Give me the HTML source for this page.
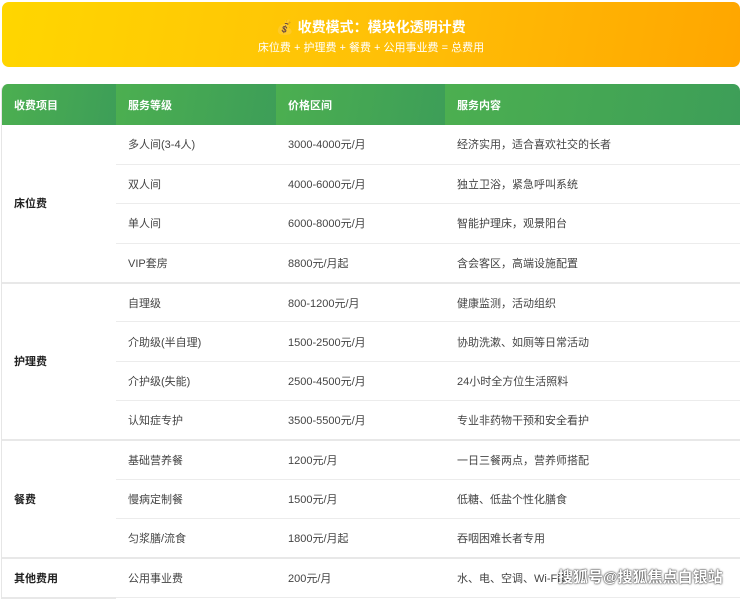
<!DOCTYPE html>
<html><head><meta charset="utf-8"><style>
*{margin:0;padding:0;box-sizing:border-box}
body{width:740px;height:594px;background:#fff;font-family:"Liberation Sans","Noto Sans CJK SC",sans-serif;overflow:hidden;position:relative}
.banner{position:absolute;left:2px;top:2px;width:738px;height:65px;border-radius:7px;background:linear-gradient(100deg,#ffd600,#ffc107 50%,#ffa600);text-align:center;color:#fff}
.t1{position:absolute;top:15px;left:0;right:0;font-size:14px;font-weight:bold}
.t2{position:absolute;top:37px;left:0;right:0;font-size:11px}
.tbl{position:absolute;left:1px;top:84px;width:739px;border-radius:7px 7px 0 0;overflow:hidden;border-left:1px solid #e6e6e6}
table{border-collapse:collapse;width:739px;font-size:11px;color:#444}
th{height:41px;color:#fff;font-weight:bold;text-align:left;padding-left:12px;background:linear-gradient(100deg,#4caf50,#3d9e58)}
td{height:39.4px;padding-left:12px;border-bottom:1px solid #ececec}
td.g{font-weight:bold;color:#222;border-bottom:2px solid #e8e8e8}
tr.e td{border-bottom:2px solid #e8e8e8}
.wm{position:absolute;left:558px;top:566px;font-size:15px;color:#fff;font-weight:bold;text-shadow:0 0 2px #333,0 0 1px #000}
</style></head><body>
<div class="banner"><div class="t1">💰 收费模式：模块化透明计费</div><div class="t2">床位费 + 护理费 + 餐费 + 公用事业费 = 总费用</div></div>
<div class="tbl"><table>
<colgroup><col style="width:114px"><col style="width:160px"><col style="width:169px"><col></colgroup>
<tr><th>收费项目</th><th>服务等级</th><th>价格区间</th><th>服务内容</th></tr>
<tr><td class="g" rowspan="4">床位费</td><td>多人间(3-4人)</td><td>3000-4000元/月</td><td>经济实用，适合喜欢社交的长者</td></tr>
<tr><td>双人间</td><td>4000-6000元/月</td><td>独立卫浴，紧急呼叫系统</td></tr>
<tr><td>单人间</td><td>6000-8000元/月</td><td>智能护理床，观景阳台</td></tr>
<tr class="e"><td>VIP套房</td><td>8800元/月起</td><td>含会客区，高端设施配置</td></tr>
<tr><td class="g" rowspan="4">护理费</td><td>自理级</td><td>800-1200元/月</td><td>健康监测，活动组织</td></tr>
<tr><td>介助级(半自理)</td><td>1500-2500元/月</td><td>协助洗漱、如厕等日常活动</td></tr>
<tr><td>介护级(失能)</td><td>2500-4500元/月</td><td>24小时全方位生活照料</td></tr>
<tr class="e"><td>认知症专护</td><td>3500-5500元/月</td><td>专业非药物干预和安全看护</td></tr>
<tr><td class="g" rowspan="3">餐费</td><td>基础营养餐</td><td>1200元/月</td><td>一日三餐两点，营养师搭配</td></tr>
<tr><td>慢病定制餐</td><td>1500元/月</td><td>低糖、低盐个性化膳食</td></tr>
<tr class="e"><td>匀浆膳/流食</td><td>1800元/月起</td><td>吞咽困难长者专用</td></tr>
<tr><td class="g">其他费用</td><td>公用事业费</td><td>200元/月</td><td>水、电、空调、Wi-Fi等</td></tr>
</table></div>
<div class="wm">搜狐号@搜狐焦点白银站</div>
</body></html>
